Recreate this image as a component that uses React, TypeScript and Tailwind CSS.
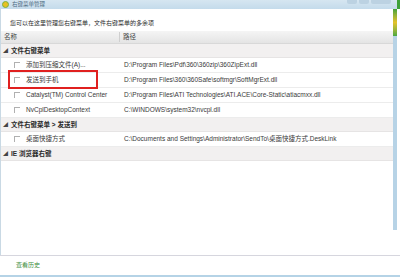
import React from "react";

const font = { fontFamily: '"Liberation Sans", "Noto Sans CJK SC", sans-serif' };

type Item = { name: string; path: string };

const groups: { title: string; items: Item[] }[] = [
  {
    title: "文件右键菜单",
    items: [
      { name: "添加到压缩文件(A)...", path: "D:\\Program Files\\Pdf\\360\\360zip\\360ZipExt.dll" },
      { name: "发送到手机", path: "D:\\Program Files\\360\\360Safe\\softmgr\\SoftMgrExt.dll" },
      { name: "Catalyst(TM) Control Center", path: "D:\\Program Files\\ATI Technologies\\ATI.ACE\\Core-Static\\atiacmxx.dll" },
      { name: "NvCplDesktopContext", path: "C:\\WINDOWS\\system32\\nvcpl.dll" },
    ],
  },
  {
    title: "文件右键菜单 > 发送到",
    items: [
      { name: "桌面快捷方式", path: "C:\\Documents and Settings\\Administrator\\SendTo\\桌面快捷方式.DeskLink" },
    ],
  },
  { title: "IE 浏览器右键", items: [] },
];

function GroupRow({ title }: { title: string }) {
  return (
    <div className="flex h-[14px] items-center bg-[#f2f0f0] border-b border-[#e6e4e4] pl-[2px]">
      <span className="text-[5px] text-[#444] mr-[3px]">◢</span>
      <span className="text-[6.5px] font-bold text-[#2a2a2a]">{title}</span>
    </div>
  );
}

function ItemRow({ item }: { item: Item }) {
  return (
    <div className="flex h-[15px] items-center bg-white border-b border-[#ececec]">
      <div className="w-[123px] flex items-center pl-[13px] shrink-0">
        <span className="w-[6px] h-[6px] border-t border-l border-[#b0b0b0] bg-white shrink-0" />
        <span className="ml-[6px] text-[6.5px] text-[#3a3a3a] whitespace-nowrap">{item.name}</span>
      </div>
      <span className="text-[6.5px] text-[#3a3a3a] whitespace-nowrap">{item.path}</span>
    </div>
  );
}

export default function App() {
  return (
    <div className="w-[400px] h-[277px] bg-white flex flex-col overflow-hidden relative" style={font}>
      {/* title bar */}
      <div className="flex h-[9px] shrink-0">
        <div className="w-[397px] flex items-center bg-gradient-to-b from-[#d6e6f1] to-[#c4dbeb] pl-[2px] relative">
          <span className="w-[7px] h-[7px] rounded-full bg-[#e8c020] border border-[#7ab040]" />
          <span className="ml-[3px] text-[5.5px] leading-none text-[#4d6a80]">右键菜单管理</span>
          <div className="absolute right-[6px] top-0 flex gap-[2px]">
            <span className="w-[10px] h-[4px] rounded-b-[2px] bg-[#bcd2e2]" />
            <span className="w-[10px] h-[4px] rounded-b-[2px] bg-[#bcd2e2]" />
            <span className="w-[20px] h-[4px] rounded-b-[2px] bg-[#bcd2e2]" />
          </div>
        </div>
        <div className="w-[3px] bg-[#3fa23a]" />
      </div>

      <div className="flex flex-1 min-h-0">
        <div className="w-[393px] flex flex-col border-l border-[#c9d9e4]">
          <div className="h-[22px] shrink-0 pl-[9px] pt-[10px] text-[6px] leading-[8px] text-[#2a2a2a]">
            您可以在这里管理您右键菜单，文件右键菜单的多余项
          </div>
          <div className="h-[13px] shrink-0 flex items-center bg-gradient-to-b from-[#f5f5f5] to-[#e4e4e4] border-b border-[#d8d8d8]">
            <span className="w-[119px] pl-[3px] text-[6.5px] text-[#444] border-r border-[#cfcfcf]">名称</span>
            <span className="pl-[3px] text-[6.5px] text-[#444]">路径</span>
          </div>
          {groups.map((g) => (
            <div key={g.title} className="flex flex-col">
              <GroupRow title={g.title} />
              {g.items.map((it) => (
                <ItemRow key={it.name} item={it} />
              ))}
            </div>
          ))}
          <div className="flex-1" />
        </div>
        <div className="w-[4px] flex flex-col">
          <div className="h-[27px] bg-gradient-to-b from-[#3fa23a] via-[#e3c22a] to-[#48a840]" />
          <div className="h-[194px] bg-[#b7d3e6]" />
        </div>
      </div>

      {/* footer */}
      <div className="h-[20px] shrink-0 border-t border-[#d6d6de] flex items-center pl-[16px]">
        <span className="text-[6px] text-[#3f8f3f]">查看历史</span>
      </div>
      <div className="h-[2px] shrink-0 bg-[#b5d3e6]" />

      {/* highlight box */}
      <div className="absolute left-[8px] top-[70px] w-[90px] h-[19px] border-2 border-[#e0201f]" />
    </div>
  );
}
